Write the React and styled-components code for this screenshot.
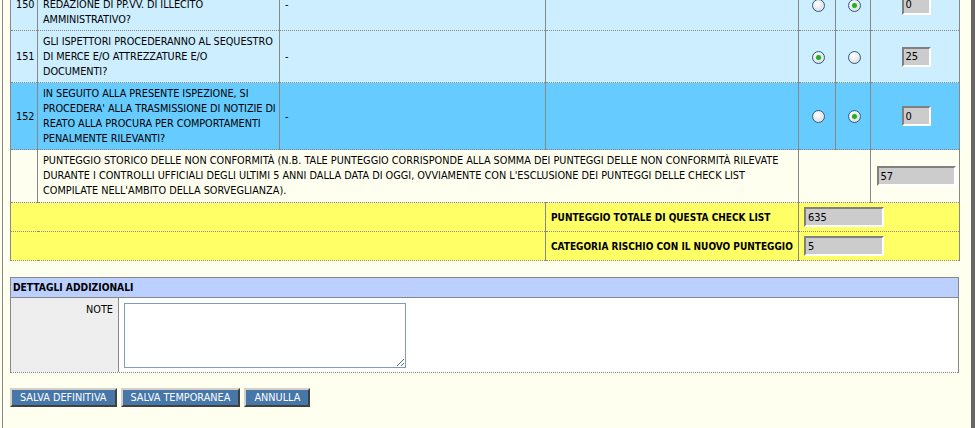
import React from 'react';
import styled, { createGlobalStyle } from 'styled-components';

const GlobalStyle = createGlobalStyle`
  body {
    margin: 0;
    background: #fffff0;
    font-family: "DejaVu Sans Condensed", "Liberation Sans", sans-serif;
    font-size: 10.8px;
    color: #000;
  }
`;

const Frame = styled.div`
  margin: -21px 0 0 2px;
  min-height: calc(100vh + 21px);
  box-sizing: border-box;
  border-left: 1px solid #888;
  border-right: 4px solid #666;
  padding: 0 12px 0 7px;
`;

const Table = styled.table`
  border-collapse: collapse;
  table-layout: fixed;
  width: 949px;
  border-left: 1px solid #888;
  border-right: 1px solid #888;
`;

const Row = styled.tr`
  background: ${({ tone }) =>
    tone === 'active' ? '#66ccff' : tone === 'yellow' ? '#ffff66' : tone === 'plain' ? 'transparent' : '#cceeff'};
`;

const Cell = styled.td`
  border-left: ${({ noLine }) => (noLine ? 'none' : '1px solid #888')};
  border-bottom: 1px dotted #888;
  padding: ${({ tight }) => (tight ? '4px 5px' : '3px 3px 3px 5px')};
  line-height: 15px;
  vertical-align: middle;
  text-align: ${({ align }) => align || 'left'};
  font-weight: ${({ bold }) => (bold ? 'bold' : 'normal')};
  font-size: ${({ bold }) => (bold ? '10px' : 'inherit')};
  white-space: ${({ nowrap }) => (nowrap ? 'nowrap' : 'normal')};
  letter-spacing: ${({ nowrap }) => (nowrap ? '-0.05px' : 'normal')};
`;

const NoteRow = styled.td`
  border-left: 1px solid #888;
  border-bottom: 1px dotted #888;
  padding: 3px 3px 4px 5px;
  line-height: 15px;
  vertical-align: middle;
`;

const Radio = styled.input.attrs({ type: 'radio' })`
  appearance: none;
  margin: 0;
  width: 13px;
  height: 13px;
  border-radius: 50%;
  border: 1px solid #2a5a8c;
  box-sizing: border-box;
  vertical-align: middle;
  background: ${({ checked }) =>
    checked
      ? 'radial-gradient(circle, #22b022 0 2px, #7fd07f 2.5px, transparent 3.2px), radial-gradient(circle at 40% 35%, #ffffff, #d6d6d6)'
      : 'radial-gradient(circle at 40% 35%, #ffffff, #d6d6d6)'};
`;

const Field = styled.input`
  width: ${({ w }) => w}px;
  height: 20px;
  box-sizing: border-box;
  margin: 0;
  padding: 0 2px;
  background: #cccccc;
  border: 2px solid;
  border-color: #808080 #ffffff #ffffff #808080;
  font-family: inherit;
  font-size: 11px;
  color: #000;
  vertical-align: middle;
`;

const Details = styled.section`
  width: 949px;
  box-sizing: border-box;
  margin-top: 16px;
  border: 1px solid #888;
  border-bottom: none;
`;

const DetailsHead = styled.div`
  background: #bbd0ff;
  border-bottom: 1px solid #888;
  height: 19px;
  line-height: 19px;
  padding-left: 2px;
  font-weight: bold;
  font-size: 10.2px;
`;

const DetailsRow = styled.div`
  display: grid;
  grid-template-columns: 108px 1fr;
  border-bottom: 1px dotted #888;
  background: #fff;
`;

const NoteLabel = styled.div`
  background: #eeeeee;
  border-right: 1px solid #888;
  text-align: right;
  padding: 5px 5px 0;
`;

const NoteCell = styled.div`
  padding: 5px 5px 4px;
`;

const NoteArea = styled.textarea`
  display: block;
  width: 282px;
  height: 65px;
  box-sizing: border-box;
  margin: 0;
  border: 1px solid #7f9db9;
  font-family: inherit;
  font-size: 10px;
`;

const Actions = styled.div`
  display: flex;
  gap: 4px;
  margin-top: 15px;
`;

const Button = styled.button`
  height: 19px;
  box-sizing: border-box;
  padding: 0 8px;
  background: #4677a8;
  color: #fff;
  border: 2px solid;
  border-color: #d4d0c8 #404040 #404040 #d4d0c8;
  font-family: inherit;
  font-size: 10.8px;
  line-height: 15px;
`;

const questions = [
  {
    n: 150,
    lines: ['GLI ISPETTORI PROCEDERANNO ALLA', 'REDAZIONE DI PP.VV. DI ILLECITO', 'AMMINISTRATIVO?'],
    yes: false,
    score: '0',
  },
  {
    n: 151,
    lines: ['GLI ISPETTORI PROCEDERANNO AL SEQUESTRO', 'DI MERCE E/O ATTREZZATURE E/O', 'DOCUMENTI?'],
    yes: true,
    score: '25',
  },
  {
    n: 152,
    lines: [
      'IN SEGUITO ALLA PRESENTE ISPEZIONE, SI',
      "PROCEDERA' ALLA TRASMISSIONE DI NOTIZIE DI",
      'REATO ALLA PROCURA PER COMPORTAMENTI',
      'PENALMENTE RILEVANTI?',
    ],
    yes: false,
    score: '0',
    active: true,
  },
];

const App = () => (
  <>
    <GlobalStyle />
    <Frame>
      <Table>
        <colgroup>
          <col style={{ width: 27 }} />
          <col style={{ width: 242 }} />
          <col style={{ width: 266 }} />
          <col style={{ width: 253 }} />
          <col style={{ width: 37 }} />
          <col style={{ width: 35 }} />
          <col style={{ width: 89 }} />
        </colgroup>
        <tbody>
          {questions.map(q => (
            <Row key={q.n} tone={q.active ? 'active' : 'light'}>
              <Cell align="center" noLine>{q.n}</Cell>
              <Cell nowrap>
                {q.lines.map((line, i) => (
                  <React.Fragment key={line}>
                    {i > 0 && <br />}
                    {line}
                  </React.Fragment>
                ))}
              </Cell>
              <Cell>-</Cell>
              <Cell />
              <Cell align="center">
                <Radio name={`q${q.n}`} checked={q.yes} readOnly />
              </Cell>
              <Cell align="center">
                <Radio name={`q${q.n}`} checked={!q.yes} readOnly />
              </Cell>
              <Cell align="center">
                <Field w={29} value={q.score} readOnly />
              </Cell>
            </Row>
          ))}
          <Row tone="plain">
            <Cell noLine />
            <NoteRow colSpan={3}>
              PUNTEGGIO STORICO DELLE NON CONFORMITÀ (N.B. TALE PUNTEGGIO CORRISPONDE ALLA SOMMA DEI
              PUNTEGGI DELLE NON CONFORMITÀ RILEVATE DURANTE I CONTROLLI UFFICIALI DEGLI ULTIMI 5 ANNI
              DALLA DATA DI OGGI, OVVIAMENTE CON L'ESCLUSIONE DEI PUNTEGGI DELLE CHECK LIST COMPILATE
              NELL'AMBITO DELLA SORVEGLIANZA).
            </NoteRow>
            <Cell colSpan={2} />
            <Cell align="center">
              <Field w={79} value="57" readOnly />
            </Cell>
          </Row>
          <Row tone="yellow">
            <Cell colSpan={3} noLine tight />
            <Cell bold tight>PUNTEGGIO TOTALE DI QUESTA CHECK LIST</Cell>
            <Cell colSpan={3} tight>
              <Field w={80} value="635" readOnly />
            </Cell>
          </Row>
          <Row tone="yellow">
            <Cell colSpan={3} noLine tight />
            <Cell bold tight>CATEGORIA RISCHIO CON IL NUOVO PUNTEGGIO</Cell>
            <Cell colSpan={3} tight>
              <Field w={80} value="5" readOnly />
            </Cell>
          </Row>
        </tbody>
      </Table>

      <Details>
        <DetailsHead>DETTAGLI ADDIZIONALI</DetailsHead>
        <DetailsRow>
          <NoteLabel>NOTE</NoteLabel>
          <NoteCell>
            <NoteArea />
          </NoteCell>
        </DetailsRow>
      </Details>

      <Actions>
        <Button type="button">SALVA DEFINITIVA</Button>
        <Button type="button">SALVA TEMPORANEA</Button>
        <Button type="button">ANNULLA</Button>
      </Actions>
    </Frame>
  </>
);

export default App;
